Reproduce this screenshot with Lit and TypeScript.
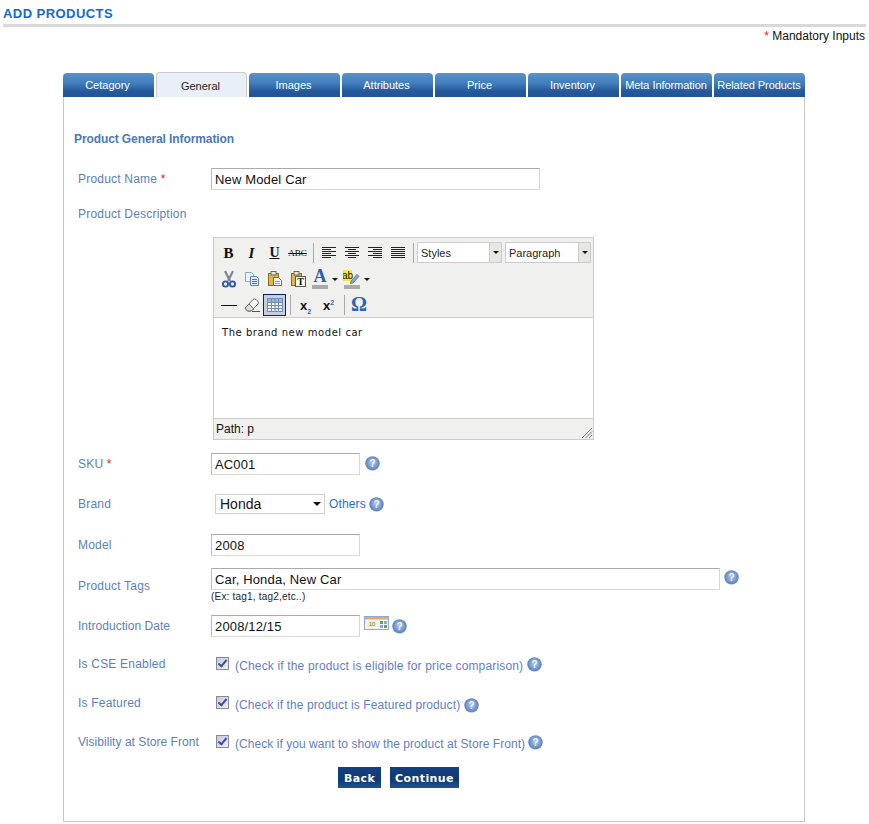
import { LitElement, html, css } from "lit";
import { customElement } from "lit/decorators.js";

const tabs = ["Cetagory", "General", "Images", "Attributes", "Price", "Inventory", "Meta Information", "Related Products"];

// alignment icons: one [from, to] pair for every dark line, 2px apart
const alignIcon = (rows: number[][]) => {
  const d = rows.map(([a, b], i) => `M${a} ${2.5 + i * 2}H${b}`).join("");
  return html`<svg width="16" height="16" viewBox="0 0 16 16"><path d=${d} stroke="#222" fill="none"/></svg>`;
};
const alignLeft = alignIcon([[1,15],[1,10],[1,15],[1,10],[1,15],[1,10]]);
const alignCenter = alignIcon([[1,15],[4,12],[1,15],[4,12],[1,15],[4,12]]);
const alignRight = alignIcon([[1,15],[6,15],[1,15],[6,15],[1,15],[6,15]]);
const justify = alignIcon([[1,15],[1,15],[1,15],[1,15],[1,15],[1,15]]);

const scissors = html`<svg width="16" height="18" viewBox="0 0 16 18">
  <path d="M4 1 L9 11 M12 1 L7 11" stroke="#7c8894" stroke-width="2.2" fill="none"/>
  <circle cx="4.5" cy="14" r="2.6" fill="none" stroke="#2c55a8" stroke-width="1.8"/>
  <circle cx="11.5" cy="14" r="2.6" fill="none" stroke="#2c55a8" stroke-width="1.8"/>
</svg>`;
const copy = html`<svg width="16" height="16" viewBox="0 0 16 16">
  <path d="M1.5 1.5h6l2 2v7h-8z" fill="#eef4fb" stroke="#8aa8cc"/>
  <path d="M6.5 5.5h6l2 2v7h-8z" fill="#dfeafa" stroke="#5f86bd"/>
  <path d="M8 8.5h5M8 10.5h5M8 12.5h5" stroke="#4f77b3"/>
</svg>`;
const paste = html`<svg width="16" height="16" viewBox="0 0 16 16">
  <rect x="1.5" y="2.5" width="10" height="12" fill="#e2b64e" stroke="#8a6a1f"/>
  <rect x="4" y="0.5" width="5" height="3.5" fill="#e9e4d0" stroke="#6e6a55"/>
  <path d="M6.5 6.5h5l3 3v5h-8z" fill="#fff" stroke="#5a6a80"/>
  <path d="M8 10.5h5M8 12.5h5" stroke="#8b9cb5"/>
</svg>`;
const pasteText = html`<svg width="16" height="16" viewBox="0 0 16 16">
  <rect x="1.5" y="2.5" width="10" height="12" fill="#e2b64e" stroke="#8a6a1f"/>
  <rect x="4" y="0.5" width="5" height="3.5" fill="#e9e4d0" stroke="#6e6a55"/>
  <rect x="5.5" y="5.5" width="10" height="10" fill="#fffdf2" stroke="#59564a"/>
  <text x="10.5" y="14" text-anchor="middle" font-family="Liberation Serif" font-weight="700" font-size="10" fill="#111">T</text>
</svg>`;
const highlight = html`<svg width="18" height="20" viewBox="0 0 18 20">
  <rect x="0" y="1" width="9" height="11" fill="#f4ea30"/>
  <text x="4.5" y="10" text-anchor="middle" font-family="Liberation Sans" font-size="10" fill="#111">ab</text>
  <path d="M8 12 L14 5.5 L16 7.5 L10 14 L7.5 14.5 Z" fill="#8fa3bf" stroke="#5d7190" stroke-width="0.8"/>
  <rect x="1" y="16" width="16" height="4" fill="#aaa"/>
</svg>`;
const eraser = html`<svg width="18" height="16" viewBox="0 0 18 16">
  <path d="M2 11 L10 2.5 Q11.5 1.5 13 2.5 L15 4.5 Q16 6 15 7 L8 14 H4.5 Z" fill="#f6f6f6" stroke="#6a6a6a"/>
  <path d="M2 11 L6 7 L11 12 L8 14 H4.5 Z" fill="#dcdcdc" stroke="#6a6a6a"/>
  <path d="M9 14.5 H17" stroke="#555"/>
</svg>`;
const table = html`<svg width="16" height="16" viewBox="0 0 16 16">
  <rect x="0.5" y="1.5" width="15" height="13" fill="#f1f5fb" stroke="#6f8db8"/>
  <rect x="1" y="2" width="14" height="3" fill="#9db4d2"/>
  <path d="M0.5 5.5h15M0.5 8.5h15M0.5 11.5h15M4.5 2v12M8 2v12M11.5 2v12" stroke="#6f8db8" fill="none"/>
</svg>`;
const omega = html`<svg width="22" height="22" viewBox="0 0 22 22">
  <text x="10" y="16.5" text-anchor="middle" font-family="Liberation Serif" font-weight="700" font-size="20" fill="#2a64b8">Ω</text>
</svg>`;
const help = html`<svg class="help" width="15" height="15" viewBox="0 0 15 15">
  <defs>
    <radialGradient id="hg" cx="50%" cy="45%" r="55%">
      <stop offset="0" stop-color="#b9cce8"/><stop offset="0.55" stop-color="#7f9fd0"/><stop offset="0.85" stop-color="#5d86c0"/><stop offset="1" stop-color="#b4c6e0"/>
    </radialGradient>
  </defs>
  <circle cx="7.5" cy="7.5" r="7.3" fill="url(#hg)"/>
  <text x="7.5" y="11" text-anchor="middle" font-family="Liberation Sans" font-weight="700" font-size="10" fill="#f4f7fc">?</text>
</svg>`;
const calendar = html`<svg width="25" height="14" viewBox="0 0 25 14">
  <rect x="0.5" y="0.5" width="24" height="13" fill="#eef4fc" stroke="#8fa9d2"/>
  <rect x="1" y="1" width="23" height="2.5" fill="#f0a860"/>
  <rect x="4" y="5" width="8" height="6" fill="#f7edc4"/>
  <text x="8" y="10" text-anchor="middle" font-family="Liberation Sans" font-size="5.5" fill="#5b7f2e">10</text>
  <rect x="16" y="5" width="3" height="3" fill="#5aa84a"/><rect x="20" y="5" width="3" height="3" fill="#8fa8c8"/>
  <rect x="16" y="9" width="3" height="3" fill="#8fa8c8"/><rect x="20" y="9" width="3" height="3" fill="#5aa84a"/>
</svg>`;

@customElement("app-root")
export class AppRoot extends LitElement {
  static styles = css`
    :host {
      display: block;
      width: 869px;
      background: #fff;
      font-family: "Liberation Sans", Arial, sans-serif;
      font-size: 12px;
      color: #111;
    }
    .title {
      margin: 0;
      padding: 6px 3px 0;
      height: 18px;
      line-height: 15px;
      font-size: 13px;
      font-weight: 700;
      letter-spacing: 0.45px;
      color: #1268d8;
    }
    .rule {
      margin: 0 3px;
      height: 3px;
      background: #d9d9d9;
    }
    .mandatory {
      margin: 0;
      padding: 2px 4px 0 0;
      height: 14px;
      line-height: 14px;
      text-align: right;
    }
    .req { color: #e0202a; }
    .tabs {
      display: flex;
      gap: 2px;
      margin: 30px 0 0 63px;
      width: 742px;
      height: 24px;
    }
    .tab {
      flex: 0 0 91px;
      display: flex;
      align-items: center;
      justify-content: center;
      box-sizing: border-box;
      padding-right: 2px;
      border-radius: 4px 4px 0 0;
      background: linear-gradient(#5b94cc 0, #3f7cba 45%, #25599c 75%, #215496 100%);
      color: #fff;
      font-size: 11px;
      white-space: nowrap;
    }
    .tab.wide { padding-right: 1px; letter-spacing: -0.06px; }
    .tab.active {
      background: #e9eff6;
      color: #222;
      border: 1px solid #ccc;
      border-bottom: none;
      margin-top: -1px;
      padding-top: 1px;
    }
    .panel {
      box-sizing: border-box;
      margin-left: 63px;
      width: 742px;
      height: 725px;
      padding: 34px 14px 0;
      border: 1px solid #c8c8c8;
      border-top: none;
    }
    .section {
      margin: 0 0 21px -4px;
      height: 16px;
      line-height: 16px;
      font-size: 12px;
      font-weight: 700;
      letter-spacing: -0.1px;
      color: #4a79b8;
    }
    .row {
      display: flex;
      align-items: center;
    }
    .label {
      flex: 0 0 133px;
      color: #5a7fbd;
      letter-spacing: 0.2px;
      white-space: nowrap;
    }
    .label.tight { letter-spacing: 0.04px; }
    .desc { height: 18px; margin: 15px 0 14px; }
    input[type="text"] {
      box-sizing: border-box;
      height: 22px;
      padding: 1px 3px;
      border: 1px solid #d8d8d8;
      border-top-color: #aaa;
      border-left-color: #bbb;
      outline: none;
      font-family: "Liberation Sans", Arial, sans-serif;
      font-size: 13px;
      letter-spacing: 0.15px;
      color: #111;
      background: #fff;
    }
    .w329 { width: 329px; }
    .w149 { width: 149px; }
    .w509 { width: 509px; }
    .help { display: block; flex: none; }
    .editor {
      box-sizing: border-box;
      margin-left: 135px;
      width: 381px;
      height: 203px;
      display: flex;
      flex-direction: column;
      border: 1px solid #ccc;
      background: #fff;
    }
    .toolbar {
      height: 80px;
      padding: 2px 0 0 3px;
      background: #f0f0ee;
      border-bottom: 1px solid #ccc;
      box-sizing: border-box;
    }
    .tb-row {
      display: flex;
      align-items: center;
      height: 26px;
    }
    .btn {
      flex: 0 0 23px;
      height: 22px;
      display: flex;
      align-items: center;
      justify-content: center;
      box-sizing: border-box;
      font-family: "Liberation Serif", serif;
      color: #111;
    }
    .btn.on {
      border: 1px solid #0a246a;
      background: #c2cfe5;
    }
    .b { font-weight: 700; font-size: 15px; }
    .i { font-style: italic; font-weight: 700; font-size: 15px; }
    .u { text-decoration: underline; font-weight: 700; font-size: 14px; }
    .abc { text-decoration: line-through; font-size: 9px; }
    .sep {
      flex: none;
      width: 1px;
      height: 20px;
      background: #aaa;
      margin: 0 3px 0 4px;
    }
    .pick {
      display: flex;
      flex: none;
      box-sizing: border-box;
      height: 21px;
      margin-top: -2px;
      align-items: center;
      border: 1px solid #ccc;
      background: #fff;
      font-size: 11px;
      padding-left: 3px;
      color: #222;
    }
    .pick .txt { flex: 1; padding-top: 1px; }
    .pick .arr {
      align-self: stretch;
      width: 11px;
      display: flex;
      align-items: center;
      justify-content: center;
      background: #e6e6e4;
      border-left: 1px solid #ccc;
    }
    .tri {
      display: block;
      width: 0;
      height: 0;
      border-left: 3px solid transparent;
      border-right: 3px solid transparent;
      border-top: 3px solid #111;
    }
    .w85 { width: 85px; margin-right: 3px; }
    .w86 { width: 86px; }
    .color {
      flex: 0 0 18px;
      display: flex;
      flex-direction: column;
      align-items: center;
      margin-left: 2px;
    }
    .color .glyph {
      height: 15px;
      line-height: 15px;
      font-weight: 700;
      font-family: "Liberation Serif", serif;
      font-size: 18px;
      color: #2a5fb0;
    }
    .color .bar {
      width: 16px;
      height: 4px;
      background: #aaa;
      margin-top: 1px;
    }
    .drop { flex: 0 0 7px; margin: 0 2px 0 3px; }
    .hr {
      display: block;
      width: 16px;
      height: 1px;
      background: #111;
    }
    .sub {
      font-family: "Liberation Sans", sans-serif;
      font-weight: 700;
      font-size: 13px;
    }
    .sub sub, .sub sup {
      font-size: 7px;
      color: #2a64b8;
      line-height: 0;
    }
    .area {
      flex: 1;
      padding: 8px 8px;
      font-family: "DejaVu Sans", Verdana, sans-serif;
      font-size: 10px;
      letter-spacing: 0.55px;
      line-height: 14px;
      color: #111;
    }
    .status {
      position: relative;
      height: 21px;
      box-sizing: border-box;
      padding: 0 2px;
      line-height: 21px;
      font-size: 12px;
      background: #f0f0ee;
      border-top: 1px solid #ccc;
    }
    .grip {
      position: absolute;
      right: 0;
      bottom: 0;
      display: block;
    }
    .select {
      position: relative;
      margin-left: 4px;
      width: 110px;
      height: 20px;
    }
    .select select {
      box-sizing: border-box;
      appearance: none;
      width: 100%;
      height: 100%;
      padding: 0 0 0 4px;
      border: 1px solid #d0d0d0;
      border-radius: 0;
      background: #fff;
      font-family: "Liberation Sans", Arial, sans-serif;
      font-size: 14px;
      color: #111;
      outline: none;
    }
    .select .tri {
      position: absolute;
      right: 4px;
      top: 8px;
      border-left-width: 4px;
      border-right-width: 4px;
      border-top-width: 4px;
      pointer-events: none;
    }
    .others {
      margin: 0 3px 0 4px;
      color: #1a6fe0;
      text-decoration: none;
      letter-spacing: 0.15px;
    }
    .sku { margin-top: 13px; }
    .sku .help { margin: -1px 0 0 5px; }
    .brand { margin-top: 19px; height: 20px; }
    .model { margin-top: 20px; }
    .tags { margin-top: 12px; height: 35px; }
    .tags .field { align-self: flex-start; }
    .tags .help { align-self: flex-start; margin: 2px 0 0 4px; }
    .hint {
      margin-top: 1px;
      height: 11px;
      line-height: 11px;
      font-size: 10px;
      letter-spacing: 0.2px;
      color: #223;
    }
    .date { margin-top: 12px; }
    .date .cal { display: block; margin: -3px 0 0 4px; }
    .date .help { margin: 0 0 0 3px; }
    .check-row {
      height: 18px;
      margin-top: 21px;
    }
    .check-row.first { margin-top: 18px; }
    .check-row input {
      appearance: none;
      position: relative;
      flex: none;
      box-sizing: border-box;
      width: 13px;
      height: 13px;
      margin: -2px 6px 0 5px;
      border: 1px solid #8a8a8a;
      background: linear-gradient(135deg, #c6cade, #eef0f6);
    }
    .check-row input::after {
      content: "";
      position: absolute;
      left: 3px;
      top: 0;
      width: 3px;
      height: 7px;
      border: solid #3f4fa8;
      border-width: 0 2px 2px 0;
      transform: rotate(40deg);
    }
    .note {
      padding-top: 3px;
      color: #5f80c8;
      white-space: nowrap;
    }
    .cse .note { letter-spacing: 0.16px; }
    .featured .note { letter-spacing: 0.09px; }
    .visible .note { letter-spacing: 0.05px; }
    .check-row .help { margin-left: 4px; }
    .featured .help { margin-top: 5px; }
    .visible .help { margin-top: 1px; margin-left: 3px; }
    .actions {
      display: flex;
      gap: 9px;
      margin: 16px 0 0 260px;
    }
    .actions button {
      height: 21px;
      padding: 1px 0 0;
      border: none;
      background: linear-gradient(#16407f, #0c3a78 60%, #21528f);
      color: #fff;
      font-family: "DejaVu Sans", Verdana, sans-serif;
      font-size: 11px;
      font-weight: 700;
      letter-spacing: 0.4px;
    }
    .back { width: 43px; }
    .continue { width: 69px; }
  `;

  render() {
    return html`
      <h1 class="title">ADD PRODUCTS</h1>
      <div class="rule"></div>
      <p class="mandatory"><span class="req">*</span> Mandatory Inputs</p>
      <div class="tabs">
        ${tabs.map((t) => html`<div class="tab ${t === "General" ? "active" : ""} ${t.length > 12 ? "wide" : ""}">${t}</div>`)}
      </div>
      <div class="panel">
        <div class="section">Product General Information</div>
        <div class="row">
          <div class="label">Product Name <span class="req">*</span></div>
          <input type="text" class="w329" .value=${"New Model Car"} />
        </div>
        <div class="row desc"><div class="label">Product Description</div></div>
        ${this.renderEditor()}
        <div class="row sku">
          <div class="label">SKU <span class="req">*</span></div>
          <input type="text" class="w149" .value=${"AC001"} />
          ${help}
        </div>
        <div class="row brand">
          <div class="label">Brand</div>
          <div class="select">
            <select><option>Honda</option></select>
            <span class="tri"></span>
          </div>
          <a class="others" href="#">Others</a>
          ${help}
        </div>
        <div class="row model">
          <div class="label">Model</div>
          <input type="text" class="w149" .value=${"2008"} />
        </div>
        <div class="row tags">
          <div class="label">Product Tags</div>
          <div class="field">
            <input type="text" class="w509" .value=${"Car, Honda, New Car"} />
            <div class="hint">(Ex: tag1, tag2,etc..)</div>
          </div>
          ${help}
        </div>
        <div class="row date">
          <div class="label tight">Introduction Date</div>
          <input type="text" class="w149" .value=${"2008/12/15"} />
          <span class="cal">${calendar}</span>
          ${help}
        </div>
        <div class="row check-row first cse">
          <div class="label">Is CSE Enabled</div>
          <input type="checkbox" checked />
          <span class="note">(Check if the product is eligible for price comparison)</span>
          ${help}
        </div>
        <div class="row check-row featured">
          <div class="label">Is Featured</div>
          <input type="checkbox" checked />
          <span class="note">(Check if the product is Featured product)</span>
          ${help}
        </div>
        <div class="row check-row visible">
          <div class="label tight">Visibility at Store Front</div>
          <input type="checkbox" checked />
          <span class="note">(Check if you want to show the product at Store Front)</span>
          ${help}
        </div>
        <div class="actions">
          <button class="back">Back</button>
          <button class="continue">Continue</button>
        </div>
      </div>
    `;
  }

  renderEditor() {
    const tri = html`<span class="drop"><span class="tri"></span></span>`;
    return html`
      <div class="editor">
        <div class="toolbar">
          <div class="tb-row">
            <span class="btn b">B</span>
            <span class="btn i">I</span>
            <span class="btn u">U</span>
            <span class="btn abc">ABC</span>
            <span class="sep"></span>
            <span class="btn">${alignLeft}</span>
            <span class="btn">${alignCenter}</span>
            <span class="btn">${alignRight}</span>
            <span class="btn">${justify}</span>
            <span class="sep"></span>
            <div class="pick w85"><span class="txt">Styles</span><span class="arr"><span class="tri"></span></span></div>
            <div class="pick w86"><span class="txt">Paragraph</span><span class="arr"><span class="tri"></span></span></div>
          </div>
          <div class="tb-row">
            <span class="btn">${scissors}</span>
            <span class="btn">${copy}</span>
            <span class="btn">${paste}</span>
            <span class="btn">${pasteText}</span>
            <span class="color"><span class="glyph">A</span><span class="bar"></span></span>
            ${tri}
            <span class="color">${highlight}</span>
            ${tri}
          </div>
          <div class="tb-row">
            <span class="btn"><span class="hr"></span></span>
            <span class="btn">${eraser}</span>
            <span class="btn on">${table}</span>
            <span class="sep"></span>
            <span class="btn sub"><span>x<sub>2</sub></span></span>
            <span class="btn sub"><span>x<sup>2</sup></span></span>
            <span class="sep"></span>
            <span class="btn">${omega}</span>
          </div>
        </div>
        <div class="area">The brand new model car</div>
        <div class="status">
          Path: p
          <svg class="grip" width="12" height="12" viewBox="0 0 12 12">
            <path d="M11 1 L1 11 M11 4.5 L4.5 11 M11 8 L8 11" stroke="#777" fill="none"/>
          </svg>
        </div>
      </div>
    `;
  }
}
